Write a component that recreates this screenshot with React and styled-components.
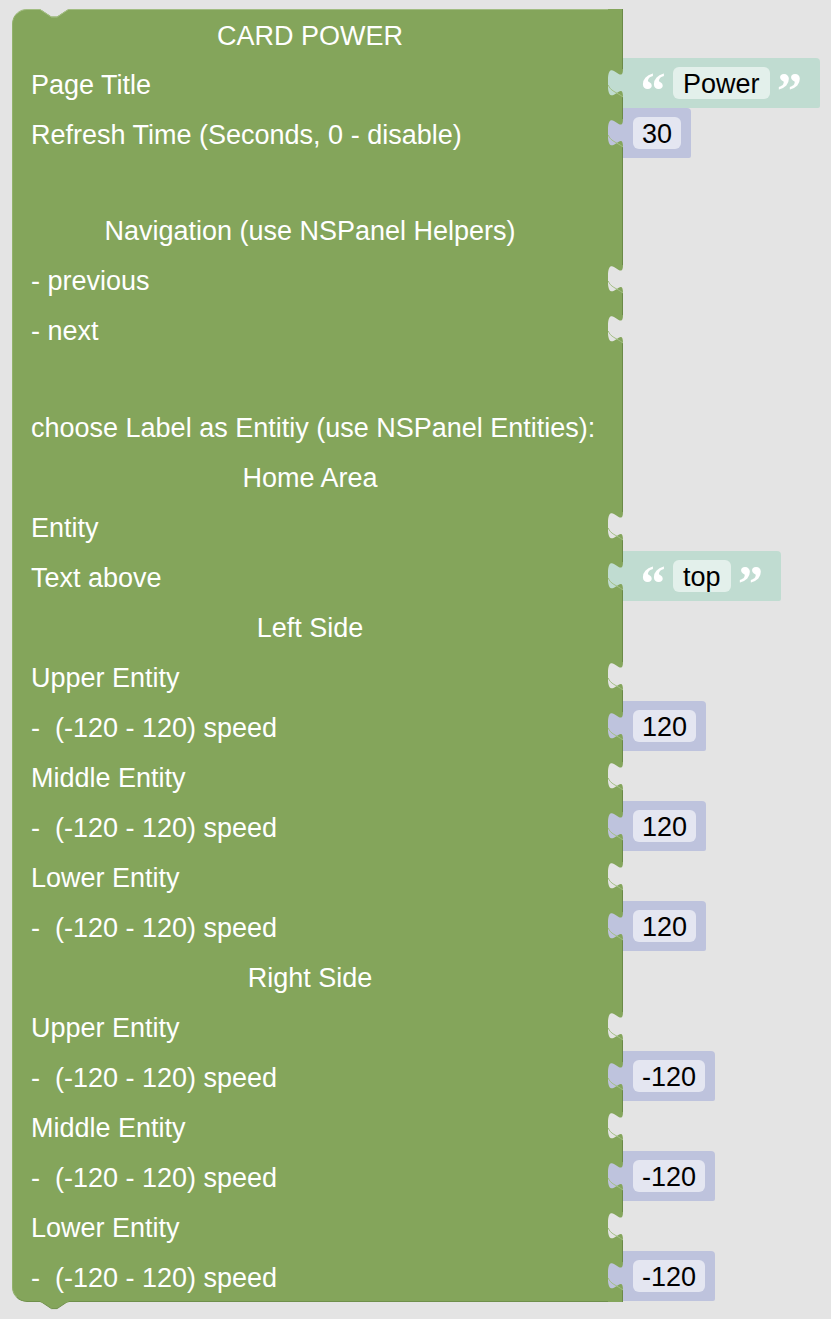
import React from "react";
import styled, { createGlobalStyle } from "styled-components";

const GREEN = "#84a55b";
const GREEN_DARK = "#6b8a47";
const BG = "#e4e4e4";
const TEXT_BLOCK = "#c0dcd1";
const TEXT_FIELD = "#e3f0eb";
const NUM_BLOCK = "#bec3dd";
const NUM_FIELD = "#e4e6f1";

const GlobalStyle = createGlobalStyle`
  html, body {
    margin: 0;
    padding: 0;
    background: ${BG};
  }
  body {
    font-family: "Liberation Sans", Arial, sans-serif;
  }
`;

const speed = "-  (-120 - 120) speed";

const rows = [
  { label: "CARD POWER", center: true },
  { label: "Page Title", input: { kind: "text", value: "Power" } },
  { label: "Refresh Time (Seconds, 0 - disable)", input: { kind: "number", value: "30" } },
  { spacer: 46 },
  { label: "Navigation (use NSPanel Helpers)", center: true },
  { label: "- previous", input: {} },
  { label: "- next", input: {} },
  { spacer: 47 },
  { label: "choose Label as Entitiy (use NSPanel Entities):" },
  { label: "Home Area", center: true },
  { label: "Entity", input: {} },
  { label: "Text above", input: { kind: "text", value: "top" } },
  { label: "Left Side", center: true },
  { label: "Upper Entity", input: {} },
  { label: speed, input: { kind: "number", value: "120" } },
  { label: "Middle Entity", input: {} },
  { label: speed, input: { kind: "number", value: "120" } },
  { label: "Lower Entity", input: {} },
  { label: speed, input: { kind: "number", value: "120" } },
  { label: "Right Side", center: true },
  { label: "Upper Entity", input: {} },
  { label: speed, input: { kind: "number", value: "-120" } },
  { label: "Middle Entity", input: {} },
  { label: speed, input: { kind: "number", value: "-120" } },
  { label: "Lower Entity", input: {} },
  { label: speed, input: { kind: "number", value: "-120" } },
];

const Page = styled.div`
  min-height: 1319px;
  padding: 9px 0 0 12px;
  box-sizing: border-box;
`;

const Block = styled.div`
  position: relative;
  display: flex;
  flex-direction: column;
  width: fit-content;
`;

const Row = styled.div`
  display: grid;
  grid-template-columns: 596px 15px 220px;
  justify-items: start;
  height: ${(p) => p.$height}px;
`;

const Label = styled.div`
  justify-self: stretch;
  background: ${GREEN};
  color: #fff;
  font-size: 27px;
  display: flex;
  align-items: center;
  justify-content: ${(p) => (p.$center ? "center" : "flex-start")};
  padding-left: ${(p) => (p.$center ? "0" : "18px")};
  padding-right: ${(p) => (p.$center ? "1px" : "0")};
  padding-top: 3px;
  white-space: pre;
  border-left: 1px solid #93b26d;
  border-top: ${(p) => (p.$first ? "1px solid #a2bd82" : "none")};
  border-bottom: ${(p) => (p.$last ? "1px solid #6f8f4b" : "none")};
  border-top-left-radius: ${(p) => (p.$first ? "15px" : "0")};
  border-bottom-left-radius: ${(p) => (p.$last ? "15px" : "0")};
  box-sizing: border-box;
`;

const ValueBlock = styled.div`
  height: 50px;
  margin-top: -1px;
  display: flex;
  align-items: center;
  gap: ${(p) => (p.$kind === "text" ? "10px" : "0")};
  padding: ${(p) => (p.$kind === "text" ? "0 20px" : "0 10px")};
  background: ${(p) => (p.$kind === "text" ? TEXT_BLOCK : NUM_BLOCK)};
  border-top-right-radius: 4px;
  border-bottom-right-radius: 2px;
  box-sizing: border-box;
`;

const Field = styled.span`
  height: 32px;
  display: flex;
  align-items: center;
  padding: 2px ${(p) => (p.$kind === "text" ? "10px" : "9px")} 0;
  border-radius: 6px;
  background: ${(p) => (p.$kind === "text" ? TEXT_FIELD : NUM_FIELD)};
  color: #000;
  font-size: 27px;
  box-sizing: border-box;
`;

const Quote = styled.span`
  width: 20px;
  height: 32px;
  display: flex;
  justify-content: center;
  color: #fff;
  font-family: "Liberation Serif", serif;
  font-weight: bold;
  font-size: 50px;
  line-height: 46px;
  overflow: visible;
`;

const TopNotch = styled.svg`
  position: absolute;
  top: 0;
  left: 28px;
`;

const BottomTab = styled.svg`
  position: absolute;
  bottom: -8px;
  left: 28px;
`;

function Edge({ height, fill }) {
  return (
    <svg width="15" height={height} style={{ display: "block" }}>
      <rect x="0" y="0" width="15" height={height} fill={GREEN} />
      {fill ? (
        <>
          <rect x="14" y="0" width="1" height="10" fill={GREEN_DARK} />
          <rect x="14" y="38" width="1" height={height - 38} fill={GREEN_DARK} />
          <path
            d="M15,9.5 c0,19 -15.2,-15.2 -15.2,14.25 s15.2,-4.75 15.2,14.25 Z"
            fill={fill}
          />
          <path
            d="M0.3,26 c2,6 8,7 14.7,12"
            fill="none"
            stroke="#a3bf84"
            strokeWidth="1"
          />
        </>
      ) : (
        <rect x="14" y="0" width="1" height={height} fill={GREEN_DARK} />
      )}
    </svg>
  );
}

function Value({ input }) {
  if (!input.kind) return null;
  if (input.kind === "text") {
    return (
      <ValueBlock $kind="text">
        <Quote>“</Quote>
        <Field $kind="text">{input.value}</Field>
        <Quote>”</Quote>
      </ValueBlock>
    );
  }
  return (
    <ValueBlock $kind="number">
      <Field $kind="number">{input.value}</Field>
    </ValueBlock>
  );
}

const fillFor = (input) => {
  if (!input) return null;
  if (input.kind === "text") return TEXT_BLOCK;
  if (input.kind === "number") return NUM_BLOCK;
  return BG;
};

export default function App() {
  return (
    <>
      <GlobalStyle />
      <Page>
        <Block>
          {rows.map((r, i) => {
            const h = r.spacer || 50;
            return (
              <Row key={i} $height={h}>
                <Label
                  $center={r.center}
                  $first={i === 0}
                  $last={i === rows.length - 1}
                >
                  {r.label || ""}
                </Label>
                <Edge height={h} fill={fillFor(r.input)} />
                {r.input ? <Value input={r.input} /> : <span />}
              </Row>
            );
          })}
          <TopNotch width="29" height="9" viewBox="0 0 29 9">
            <path d="M0,0 L11.4,7.6 L17.1,7.6 L28.5,0 Z" fill={BG} />
            <path d="M0,0.5 L11.4,8.1 L17.1,8.1 L28.5,0.5" fill="none" stroke="#a2bd82" strokeWidth="1" />
          </TopNotch>
          <BottomTab width="29" height="9" viewBox="0 0 29 9">
            <path d="M0,0 L11.4,7.6 L17.1,7.6 L28.5,0 Z" fill={GREEN} stroke="#6f8f4b" strokeWidth="1" />
            <rect x="0.5" y="0" width="28" height="1.5" fill={GREEN} />
          </BottomTab>
        </Block>
      </Page>
    </>
  );
}
